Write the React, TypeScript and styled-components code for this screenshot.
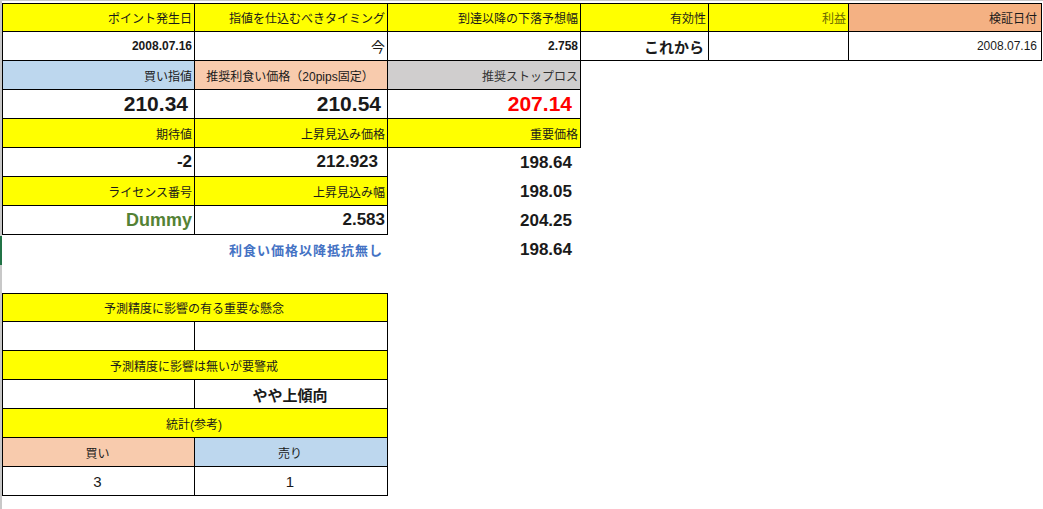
import React, { FC } from 'react';
import styled, { createGlobalStyle } from 'styled-components';

/* ---------- STYLES ---------- */

const GlobalStyle = createGlobalStyle`
    body {
        margin: 0;
        background: #ffffff;
        font-family: 'Liberation Sans', Arial, 'Noto Sans CJK JP', sans-serif;
    }
`;

const SRoot = styled.div`
    width: 1043px;
    height: 509px;
    padding: 2px 0 0 0;
    box-sizing: border-box;
    border-top: 1px solid #c8c8c8;
    border-left: 2px solid #c8c8c8;
    position: relative;
`;

const SSelMark = styled.div`
    position: absolute;
    left: -2px;
    top: 235px;
    width: 2px;
    height: 29px;
    background: #217346;
`;

const SGrid = styled.div`
    display: grid;
    grid-template-columns: 193px 193px 193px 128px 140px 193px;
    grid-auto-rows: 29px;
`;

interface CellProps {
    $bg?: string;
    $align?: 'left' | 'right' | 'center';
    $size?: number;
    $bold?: boolean;
    $color?: string;
    $b?: boolean;
    $top?: boolean;
    $left?: boolean;
    $span?: number;
    $col?: number;
    $row?: number;
    $pr?: number;
    $ls?: number;
}

const SCell = styled.div<CellProps>`
    grid-column: ${(p) => (p.$col ? `${p.$col} / span ${p.$span || 1}` : `span ${p.$span || 1}`)};
    ${(p) => (p.$row ? `grid-row: ${p.$row};` : '')}
    background: ${(p) => p.$bg || 'transparent'};
    display: flex;
    align-items: center;
    justify-content: ${(p) => (p.$align === 'center' ? 'center' : p.$align === 'left' ? 'flex-start' : 'flex-end')};
    padding-right: ${(p) => (p.$pr !== undefined ? p.$pr : 2)}px;
    font-size: ${(p) => p.$size || 12}px;
    font-weight: ${(p) => (p.$bold ? 700 : 400)};
    color: ${(p) => p.$color || '#1a1a1a'};
    letter-spacing: ${(p) => p.$ls || 0}px;
    border-right: ${(p) => (p.$b ? '1px solid #000' : 'none')};
    border-bottom: ${(p) => (p.$b ? '1px solid #000' : 'none')};
    border-top: ${(p) => (p.$top ? '1px solid #000' : 'none')};
    border-left: ${(p) => (p.$left ? '1px solid #000' : 'none')};
    box-sizing: border-box;
    white-space: nowrap;
    overflow: hidden;
`;

const YEL = '#ffff00';
const BLUE = '#bdd7ee';
const PEACH = '#f8cbad';
const SALMON = '#f4b183';
const GRAY = '#d0cece';

/* ---------- COMPONENT ---------- */

const App: FC = () => (
    <SRoot>
        <GlobalStyle />
        <SSelMark />
        <SGrid>
            {/* row 1 */}
            <SCell $bg={YEL} $b $top $left>ポイント発生日</SCell>
            <SCell $bg={YEL} $b $top>指値を仕込むべきタイミング</SCell>
            <SCell $bg={YEL} $b $top>到達以降の下落予想幅</SCell>
            <SCell $bg={YEL} $b $top>有効性</SCell>
            <SCell $bg={YEL} $b $top $color="#6b6b00">利益</SCell>
            <SCell $bg={SALMON} $b $top $pr={4}>検証日付</SCell>
            {/* row 2 */}
            <SCell $b $left $bold>2008.07.16</SCell>
            <SCell $b $size={14}>今</SCell>
            <SCell $b $bold>2.758</SCell>
            <SCell $b $size={15} $bold $pr={4}>これから</SCell>
            <SCell $b />
            <SCell $b $pr={4}>2008.07.16</SCell>
            {/* row 3 */}
            <SCell $bg={BLUE} $b $left $col={1}>買い指値</SCell>
            <SCell $bg={PEACH} $b $align="center">推奨利食い価格（20pips固定）</SCell>
            <SCell $bg={GRAY} $b $color="#333">推奨ストップロス</SCell>
            {/* row 4 */}
            <SCell $b $left $col={1} $size={21} $bold $pr={6}>210.34</SCell>
            <SCell $b $size={21} $bold $pr={6}>210.54</SCell>
            <SCell $b $size={21} $bold $color="#ff0000" $pr={8}>207.14</SCell>
            {/* row 5 */}
            <SCell $bg={YEL} $b $left $col={1}>期待値</SCell>
            <SCell $bg={YEL} $b>上昇見込み価格</SCell>
            <SCell $bg={YEL} $b>重要価格</SCell>
            {/* row 6 */}
            <SCell $b $left $col={1} $size={17} $bold>-2</SCell>
            <SCell $b $size={17} $bold $pr={9}>212.923</SCell>
            <SCell $size={17} $bold $pr={9}>198.64</SCell>
            {/* row 7 */}
            <SCell $bg={YEL} $b $left $col={1}>ライセンス番号</SCell>
            <SCell $bg={YEL} $b>上昇見込み幅</SCell>
            <SCell $size={17} $bold $pr={9}>198.05</SCell>
            {/* row 8 */}
            <SCell $b $left $col={1} $size={18} $bold $color="#548235">Dummy</SCell>
            <SCell $b $size={17} $bold>2.583</SCell>
            <SCell $size={17} $bold $pr={9}>204.25</SCell>
            {/* row 9 */}
            <SCell $col={1} $span={2} $size={13} $bold $color="#4472c4" $ls={1} $pr={5}>
                利食い価格以降抵抗無し
            </SCell>
            <SCell $size={17} $bold $pr={9}>198.64</SCell>
            {/* row 10 empty */}
            <SCell $col={1} />
            {/* bottom table */}
            <SCell $col={1} $span={2} $bg={YEL} $b $top $left $align="center">予測精度に影響の有る重要な懸念</SCell>
            <SCell $col={1} $b $left />
            <SCell $b />
            <SCell $col={1} $span={2} $bg={YEL} $b $left $align="center">予測精度に影響は無いが要警戒</SCell>
            <SCell $col={1} $b $left />
            <SCell $b $align="center" $size={15} $bold>やや上傾向</SCell>
            <SCell $col={1} $span={2} $bg={YEL} $b $left $align="center">統計(参考)</SCell>
            <SCell $col={1} $bg={PEACH} $b $left $align="center">買い</SCell>
            <SCell $bg={BLUE} $b $align="center">売り</SCell>
            <SCell $col={1} $b $left $align="center" $size={15}>3</SCell>
            <SCell $b $align="center" $size={15}>1</SCell>
        </SGrid>
    </SRoot>
);

export default App;
